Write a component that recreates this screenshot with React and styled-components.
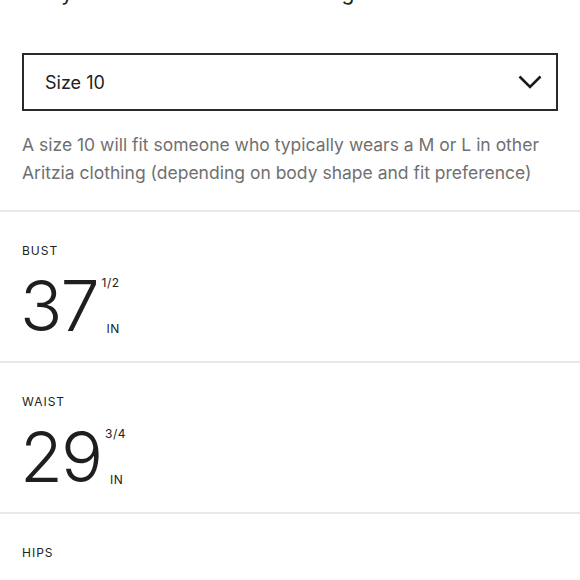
import React from "react";
import styled, { createGlobalStyle } from "styled-components";

const Global = createGlobalStyle`
  html, body { margin: 0; padding: 0; background: #fff; }
  body { font-family: "Inter", "Liberation Sans", sans-serif; color: #222; overflow: hidden; }
  *, *::before, *::after { box-sizing: border-box; }
`;

const Page = styled.div`
  width: 580px;
  height: 580px;
  overflow: hidden;
  font-family: "Inter", "Liberation Sans", sans-serif;
`;

const Title = styled.h1`
  margin: -22px 0 0;
  padding: 0 22px;
  font-family: "Inter", "Liberation Sans", sans-serif;
  font-size: 21px;
  line-height: 30px;
  font-weight: 400;
  color: #222;
  white-space: nowrap;
`;

const Select = styled.div`
  margin: 45px 22px 0;
  height: 58px;
  border: 2px solid #2a2a2a;
  display: flex;
  align-items: center;
  justify-content: space-between;
  padding: 0 14px 0 21px;
  font-size: 18px;
  color: #222;
`;

const Description = styled.p`
  margin: 20px 22px 0;
  font-size: 17.5px;
  line-height: 28px;
  color: #707070;
`;

const List = styled.div`
  margin-top: 23px;
`;

const Section = styled.section`
  border-top: 2px solid #e8e8e8;
  height: 151px;
  padding: 31px 22px 0;
`;

const Label = styled.div`
  font-size: 12px;
  letter-spacing: 1px;
  line-height: 16px;
  color: #222;
`;

const Row = styled.div`
  margin-top: 17px;
  display: flex;
  align-items: stretch;
`;

const Big = styled.div`
  margin-left: -2px;
  font-family: "Inter", "Liberation Sans", sans-serif;
  font-size: 70px;
  font-weight: 350;
  line-height: 60px;
  letter-spacing: -2px;
  color: #1e1e1e;
`;

const Side = styled.div`
  display: flex;
  flex-direction: column;
  justify-content: space-between;
  margin-left: 4px;
  font-size: 12px;
  line-height: 14px;
  letter-spacing: 0.5px;
  color: #222;
`;

const Unit = styled.span`
  padding-left: 5px;
`;

const Chevron = () => (
  <svg width="24" height="14" viewBox="0 0 24 14" fill="none">
    <path d="M1.5 1.5 L12 12 L22.5 1.5" stroke="#1a1a1a" strokeWidth="2.6" />
  </svg>
);

const measures = [
  { label: "BUST", value: "37", frac: "1/2" },
  { label: "WAIST", value: "29", frac: "3/4" },
  { label: "HIPS", value: "40", frac: "1/4" },
];

export default function App() {
  return (
    <Page>
      <Global />
      <Title>Body Measurements for the Margaux Blazer</Title>
      <Select>
        <span>Size 10</span>
        <Chevron />
      </Select>
      <Description>
        A size 10 will fit someone who typically wears a M or L in other Aritzia clothing (depending on body shape and fit preference)
      </Description>
      <List>
        {measures.map((m) => (
          <Section key={m.label}>
            <Label>{m.label}</Label>
            <Row>
              <Big>{m.value}</Big>
              <Side>
                <span>{m.frac}</span>
                <Unit>IN</Unit>
              </Side>
            </Row>
          </Section>
        ))}
      </List>
    </Page>
  );
}
